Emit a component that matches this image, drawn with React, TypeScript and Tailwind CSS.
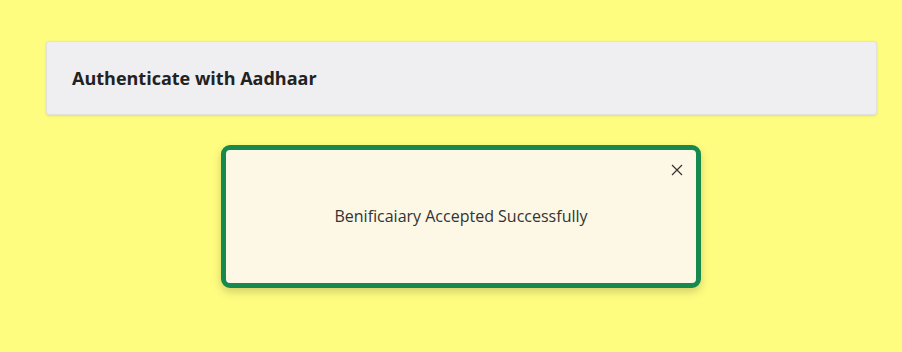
const App = () => {
  return (
    <div className="min-h-screen bg-[#fffd80] px-[46px] pt-[41px] font-['Open_Sans',sans-serif]">
      <div className="h-[74px] w-[831px] rounded-[3px] bg-[#efeef1] border border-[#e2e2dc] shadow-[0_1px_3px_rgba(0,0,0,0.12)] flex items-center px-[25px]">
        <h2 className="text-[18px] font-bold text-[#222222]">Authenticate with Aadhaar</h2>
      </div>

      <div className="flex justify-center mt-[30px] w-[830px]">
        <div className="relative w-[480px] h-[143px] rounded-[9px] border-[5px] border-[#168a4e] bg-[#fdf7e6] shadow-[0_4px_10px_rgba(0,0,0,0.18)] flex items-center justify-center">
          <p className="text-[16px] text-[#333333] -mt-[2px]">Benificaiary Accepted Successfully</p>
          <button className="absolute right-[13px] top-[14px] text-[#333333]">
            <svg width="12" height="12" viewBox="0 0 12 12" fill="none" stroke="currentColor" strokeWidth="1.2">
              <path d="M1 1L11 11M11 1L1 11" />
            </svg>
          </button>
        </div>
      </div>
    </div>
  );
};

export default App;
